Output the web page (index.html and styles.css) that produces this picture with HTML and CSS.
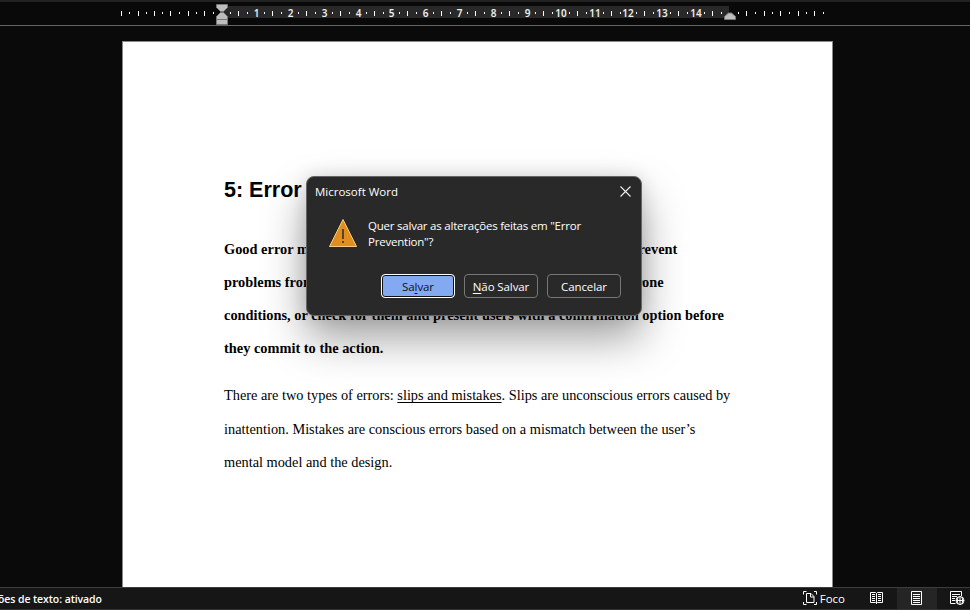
FILE: index.html
```html
<!DOCTYPE html>
<html lang="pt-BR">
<head>
<meta charset="utf-8">
<title>Microsoft Word</title>
<link rel="stylesheet" href="styles.css">
</head>
<body>
<div class="app">
  <header class="ruler">
    <svg width="970" height="26" viewBox="0 0 970 26">
      <rect x="222" y="6" width="507" height="12" fill="#292929"/>
      <path class="tick" d="M121.5 11v5M138.5 11v5M154.5 11v5M170.5 11v5M188.5 11v5M204.5 11v5M238.5 11v5M272.5 11v5M306.5 11v5M340.5 11v5M374.5 11v5M407.5 11v5M441.5 11v5M475.5 11v5M509.5 11v5M543.5 11v5M577.5 11v5M611.5 11v5M644.5 11v5M678.5 11v5M712.5 11v5M746.5 11v5M764.5 11v5M780.5 11v5M798.5 11v5M814.5 11v5"/>
      <path class="tick" d="M129.5 12v2M146.5 12v2M162.5 12v2M179.5 12v2M196.5 12v2M213.5 12v2M230.5 12v2M247.5 12v2M264.5 12v2M281.5 12v2M298.5 12v2M315.5 12v2M332.5 12v2M349.5 12v2M366.5 12v2M383.5 12v2M399.5 12v2M416.5 12v2M433.5 12v2M450.5 12v2M467.5 12v2M484.5 12v2M501.5 12v2M518.5 12v2M535.5 12v2M552.5 12v2M569.5 12v2M586.5 12v2M603.5 12v2M620.5 12v2M636.5 12v2M653.5 12v2M670.5 12v2M687.5 12v2M704.5 12v2M721.5 12v2M738.5 12v2M755.5 12v2M772.5 12v2M789.5 12v2M806.5 12v2M823.5 12v2"/>
      <g class="numbers">
        <text x="256.5" y="16.5">1</text><text x="290.5" y="16.5">2</text><text x="324.5" y="16.5">3</text><text x="358.5" y="16.5">4</text><text x="391.5" y="16.5">5</text><text x="425.5" y="16.5">6</text><text x="459.5" y="16.5">7</text><text x="493.5" y="16.5">8</text><text x="527.5" y="16.5">9</text><text x="561" y="16.5">10</text><text x="595" y="16.5">11</text><text x="628" y="16.5">12</text><text x="662" y="16.5">13</text><text x="696" y="16.5">14</text>
      </g>
      <g fill="#bdbdbd" stroke="#777">
        <path d="M216.5 4.500h11v3l-4 4h-3l-4-4z"/>
        <path d="M216.500 19.500v-3l4-4h3l4 4v3z"/>
        <path d="M216.500 19.500h11v5h-11z"/>
        <path d="M724.500 19.500v-3l4-3.500h3l4 3.500v3z"/>
      </g>
    </svg>
  </header>
  <main class="workspace">
    <article class="page">
      <h1>5: Error</h1>
      <p class="lead">
        <span class="l1">Good error messages are important, but the best designs carefully prevent</span>
        <span class="l2">problems from occurring in the first place. Either eliminate error-prone</span>
        <span class="l3">conditions, or check for them and present users with a confirmation option before</span>
        <span class="l4">they commit to the action.</span>
      </p>
      <p class="copy">
        <span class="c1">There are two types of errors: <a>slips and mistakes</a>. Slips are unconscious errors caused by</span>
        <span class="c2">inattention. Mistakes are conscious errors based on a mismatch between the user’s</span>
        <span class="c3">mental model and the design.</span>
      </p>
    </article>
  </main>
  <footer class="status">
    <span class="lang">ões de texto: ativado</span>
    <div class="views">
      <div class="focus">
        <svg width="15" height="15" viewBox="0 0 15 15" fill="none" stroke="#fff"><path d="M3.500 .5H.5v3M.5 11v2.500h3M11 .5h2.500v3M13.500 11v2.500h-2.500M3.500 2.500h4.500l3 3v6H3.500zM7.500 2.500v3.500h3.500"/></svg>
        <span>Foco</span>
      </div>
      <div class="view"><svg width="14" height="14" viewBox="0 0 14 14" fill="none" stroke="#fff"><path d="M.5 1.500h5l1 1 1-1h5v10h-5l-1 1-1-1h-5zM6.500 2.500V13M2 3.500h3M2 5.500h3M2 7.500h3M2 9.500h3M8 3.500h3M8 5.500h3M8 7.500h3M8 9.500h3"/></svg></div>
      <div class="view active"><svg width="14" height="14" viewBox="0 0 14 14" fill="none" stroke="#fff"><path d="M1.500.5h10v13h-10zM3 3.500h7M3 5.500h7M3 7.500h7M3 9.500h7M3 11.500h7"/></svg></div>
      <div class="view"><svg width="15" height="15" viewBox="0 0 15 15" fill="none" stroke="#fff"><path d="M5.500 12.500h-5V.5h11V5M2 3.500h8M2 5.500h5M2 7.500h3M2 9.500h3"/><circle cx="10" cy="9.500" r="4" fill="#161616"/><path d="M6 9.500h8M10 5.500v8M8 6q-1.500 3.500 0 7M12 6q1.500 3.500 0 7"/></svg></div>
    </div>
  </footer>
  <section class="dialog" role="dialog">
    <div class="titlebar">
      <span class="title">Microsoft Word</span>
      <svg width="11" height="11" viewBox="0 0 11 11" fill="none" stroke="#eee" stroke-width="1.100"><path d="M.5.5l10 10M10.500.5l-10 10"/></svg>
    </div>
    <div class="message">
      <svg width="30" height="30" viewBox="0 0 30 30"><path d="M15 1.500L28.500 28.500h-27z" fill="#e28d20" stroke="#f6ce7d"/><path d="M14 11h2v10h-2zM14 23h2v2h-2z" fill="#514633"/></svg>
      <p><span class="m1">Quer salvar as alterações feitas em "Error</span><span class="m2">Prevention"?</span></p>
    </div>
    <div class="actions">
      <button class="primary">Sa<u>l</u>var</button>
      <button><u>N</u>ão Salvar</button>
      <button>Cancelar</button>
    </div>
  </section>
</div>
</body>
</html>
```
FILE: styles.css
```css
* { box-sizing: border-box; }
body { margin: 0; background: #0a0a0a; overflow: hidden; }
h1, p { margin: 0; }
svg { display: block; flex: none; }
.app { width: 970px; height: 610px; display: flex; flex-direction: column; position: relative; font-family: "Open Sans", "Noto Sans", sans-serif; }
.ruler { height: 26px; border-top: 2px solid #222; border-bottom: 1px solid #656565; background: #090909; }
.ruler svg { margin-top: -2px; }
.tick { stroke: #fff; }
.numbers text { font: 600 10px "Noto Sans", sans-serif; fill: #eee; text-anchor: middle; }
.workspace { flex: 1; min-height: 0; padding: 15px 0 0 122px; }
.page { width: 711px; height: 546px; background: #fff; border: 1px solid #888; border-bottom: 0; padding: 134px 0 0 101px; color: #000; }
h1 { font: bold 21.5px/28px "Liberation Sans", sans-serif; white-space: nowrap; }
.lead, .copy { font: 14.35px/33px "Liberation Serif", serif; }
.lead { font-weight: bold; margin-top: 29px; letter-spacing: .012px; }
.copy { margin-top: 14px; line-height: 33.5px; letter-spacing: -.01px; }
.lead span, .copy span { display: block; width: max-content; white-space: nowrap; }
.copy a { text-decoration: underline; text-decoration-thickness: 1px; text-underline-offset: 2px; text-decoration-skip-ink: none; }
.status { height: 23px; background: #161616; border-top: 1px solid #3d3d3d; border-bottom: 1px solid #333; display: flex; justify-content: space-between; color: #fff; font-size: 10.5px; line-height: 22px; overflow: hidden; }
.lang { margin-left: -2px; font-weight: 600; letter-spacing: -.08px; }
.views { display: flex; margin-right: -7px; }
.focus { display: flex; align-items: center; gap: 2px; margin-right: 12px; font-size: 11.5px; }
.view { width: 40px; padding-bottom: 1px; display: flex; align-items: center; justify-content: center; }
.active { background: #252525; }
.dialog { position: absolute; left: 306px; top: 176px; width: 336px; height: 140px; background: #292929; border: 1px solid #666; border-radius: 8px; color: #fff; font-size: 11.5px; box-shadow: 0 22px 44px rgba(0,0,0,.38), 0 0 18px rgba(0,0,0,.12); }
.titlebar { display: flex; justify-content: space-between; align-items: center; height: 28px; padding: 0 10px 0 8px; }
.message { display: flex; padding: 13px 0 0 21px; gap: 10px; }
.message p { line-height: 16px; letter-spacing: -.22px; }
.message span { display: block; white-space: nowrap; width: max-content; }
.actions { display: flex; gap: 9px; padding: 24px 0 0 74px; }
button { width: 74px; height: 24px; border: 1px solid #777; border-radius: 4px; background: #292929; color: #fff; font: 11.5px/20px "Open Sans", "Noto Sans", sans-serif; letter-spacing: -.1px; padding: 1px 0 0; white-space: nowrap; }
button.primary { background: #83aaf1; border-color: #fff; color: #101010; box-shadow: inset 0 0 0 1px #111; }
u { text-underline-offset: 2px; }
```
